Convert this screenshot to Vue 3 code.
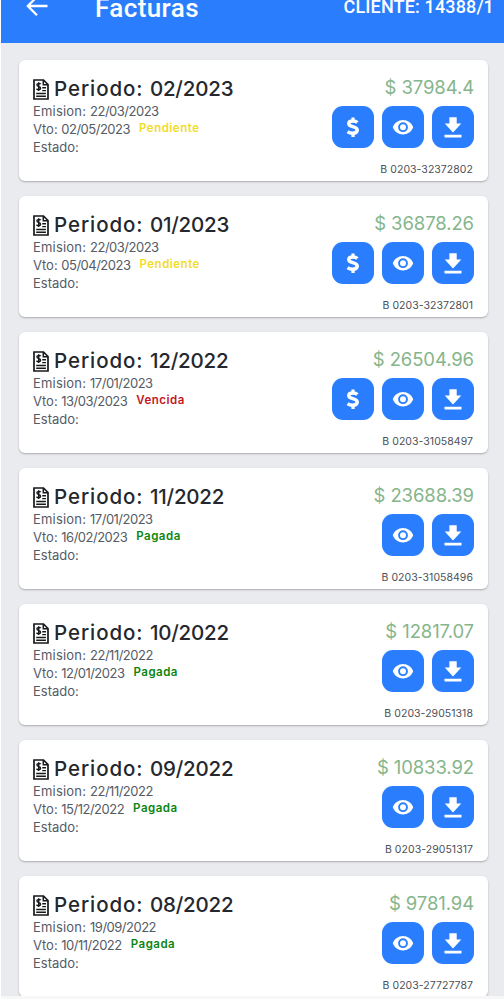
<script setup>
const invoices = [
  { period: '02/2023', issued: '22/03/2023', due: '02/05/2023', status: 'Pendiente', amount: '37984.4', number: 'B 0203-32372802' },
  { period: '01/2023', issued: '22/03/2023', due: '05/04/2023', status: 'Pendiente', amount: '36878.26', number: 'B 0203-32372801' },
  { period: '12/2022', issued: '17/01/2023', due: '13/03/2023', status: 'Vencida', amount: '26504.96', number: 'B 0203-31058497' },
  { period: '11/2022', issued: '17/01/2023', due: '16/02/2023', status: 'Pagada', amount: '23688.39', number: 'B 0203-31058496' },
  { period: '10/2022', issued: '22/11/2022', due: '12/01/2023', status: 'Pagada', amount: '12817.07', number: 'B 0203-29051318' },
  { period: '09/2022', issued: '22/11/2022', due: '15/12/2022', status: 'Pagada', amount: '10833.92', number: 'B 0203-29051317' },
  { period: '08/2022', issued: '19/09/2022', due: '10/11/2022', status: 'Pagada', amount: '9781.94', number: 'B 0203-27727787' },
]
</script>

<template>
  <div class="screen">
    <header class="bar">
      <svg class="back" viewBox="0 0 22 22" width="22" height="22">
        <path d="M21.5 11H2M11 1.8L1.8 11L11 20.2" fill="none" stroke="#fff" stroke-width="2.3" />
      </svg>
      <h1 class="heading">Facturas</h1>
      <span class="client">CLIENTE: 14388/1</span>
    </header>
    <main class="list">
      <article v-for="inv in invoices" :key="inv.number" class="card">
        <div class="info">
          <h2 class="period">
            <svg class="doc" viewBox="0 0 16 21" width="16" height="21">
              <path d="M1 1H10.5L15 5.5V20H1Z" fill="#fff" stroke="#17181a" stroke-width="1.7" />
              <path d="M10.3 1V5.7H15" fill="none" stroke="#17181a" stroke-width="1.5" />
              <path d="M7.7 5.2C6.8 4 3.8 4.2 3.9 6C4 7.8 7.6 7.2 7.6 9.2C7.6 11 4.6 11.2 3.5 9.8M5.7 3.2V12" fill="none" stroke="#17181a" stroke-width="1.4" />
              <path d="M9.2 8.8H13M9.2 11.6H13M3.2 14.5H12.9M3.2 17.2H12.9" stroke="#17181a" stroke-width="1.4" />
            </svg>
            <span class="period-text"><span class="period-label">Periodo: </span><span class="period-date">{{ inv.period }}</span></span>
          </h2>
          <p class="line"><span class="issued-label">Emision: </span><span class="date">{{ inv.issued }}</span></p>
          <p class="line due"><span>Vto: <span class="date">{{ inv.due }}</span></span><b class="status" :class="inv.status.toLowerCase()">{{ inv.status }}</b></p>
          <p class="line">Estado:</p>
        </div>
        <div class="side">
          <div class="amount">$ {{ inv.amount }}</div>
          <div class="actions">
            <button v-if="inv.status !== 'Pagada'" class="action" aria-label="Pagar">
              <svg viewBox="0 0 42 42" width="42" height="42">
                <path d="M25.3 16.6C24.2 15.5 22.6 15.1 20.8 15.1C18.3 15.1 16.8 16.2 16.8 17.7C16.8 21.5 25.2 19.8 25.2 24.1C25.2 26.3 23.2 27.3 20.6 27.3C18.4 27.3 16.8 26.6 15.6 25.7" fill="none" stroke="#fff" stroke-width="3.5" />
                <path d="M21 11.6V15.2M21 27V31" stroke="#fff" stroke-width="3.2" />
              </svg>
            </button>
            <button class="action" aria-label="Ver">
              <svg viewBox="0 0 42 42" width="42" height="42">
                <path fill="#fff" fill-rule="evenodd" d="M21 14C16.4 14 12.4 16.9 10.8 21.2C12.4 25.5 16.4 28.4 21 28.4S29.6 25.5 31.2 21.2C29.6 16.9 25.6 14 21 14ZM21 26.1A4.9 4.9 0 1 1 21 16.3A4.9 4.9 0 0 1 21 26.1ZM21 18.2A3 3 0 1 0 21 24.2A3 3 0 0 0 21 18.2Z" />
              </svg>
            </button>
            <button class="action" aria-label="Descargar">
              <svg viewBox="0 0 42 42" width="42" height="42">
                <path fill="#fff" d="M17.4 11.3H24.7V17.6H29.3L21 26.4L12.7 17.6H17.4ZM12.5 28.8H29.5V31.5H12.5Z" />
              </svg>
            </button>
          </div>
          <div class="number">{{ inv.number }}</div>
        </div>
      </article>
    </main>
    <footer class="strip"></footer>
  </div>
</template>

<style>
body { background: #fff; }
</style>

<style scoped>
.screen {
  box-sizing: border-box;
  width: 504px;
  height: 999px;
  padding-left: 1px;
  overflow: hidden;
  display: flex;
  flex-direction: column;
  font-family: Inter, "Open Sans", sans-serif;
}
.bar {
  flex: none;
  height: 43px;
  display: flex;
  align-items: flex-start;
  background: #2a7efe;
  color: #fff;
  font-family: Roboto, sans-serif;
}
.back { margin: -5px 0 0 25px; }
.heading { margin: -7px 0 0 47px; font-size: 26px; line-height: 30px; font-weight: 500; letter-spacing: 0.4px; }
.client { margin: -4px 10px 0 auto; font-size: 18px; line-height: 22px; font-weight: 500; letter-spacing: 0.15px; white-space: nowrap; }
.list {
  flex: 1;
  min-height: 0;
  overflow: hidden;
  padding: 17px 16px 0 18px;
  background: #e9ebee;
  display: flex;
  flex-direction: column;
  gap: 15px;
}
.card {
  box-sizing: border-box;
  flex: none;
  height: 121px;
  display: flex;
  justify-content: space-between;
  padding: 0 14px;
  background: #fff;
  border-radius: 6px;
  box-shadow: 0 1px 2px rgba(0, 0, 0, 0.28);
}
.info { padding-top: 15px; }
.period { display: flex; gap: 5px; align-items: center; height: 27px; margin: 0; font-size: 20.5px; font-weight: 500; color: #24272d; white-space: nowrap; }
.doc { margin-top: 1px; }
.period-text { white-space: pre; margin-top: -1px; }
.period-label { letter-spacing: 0.93px; }
.period-date { letter-spacing: -0.2px; }
.line { margin: 0; height: 18px; line-height: 18px; font-size: 13px; color: #555b65; white-space: nowrap; }
.issued-label { letter-spacing: 0.2px; }
.date { letter-spacing: -0.5px; }
.due { display: flex; gap: 9px; }
.status { font-size: 11.5px; font-weight: 600; line-height: 17px; letter-spacing: 0.5px; }
.pendiente { color: #f3dc26; }
.vencida { color: #c4161c; }
.pagada { color: #0b850f; }
.side { display: flex; flex-direction: column; align-items: flex-end; padding-top: 15px; }
.amount { height: 24px; line-height: 24px; font-size: 18.5px; color: #86b58b; letter-spacing: -0.1px; white-space: nowrap; }
.actions { display: flex; gap: 8px; margin-top: 7px; }
.action { width: 42px; height: 42px; padding: 0; border: 0; border-radius: 11px; background: #2a7efe; }
.action svg { display: block; }
.number { margin: 15px 1px 0 0; line-height: 14px; font-size: 10.5px; color: #4c5057; letter-spacing: 0.05px; white-space: nowrap; }
.strip { flex: none; height: 3px; background: #f7f7f8; }
</style>
